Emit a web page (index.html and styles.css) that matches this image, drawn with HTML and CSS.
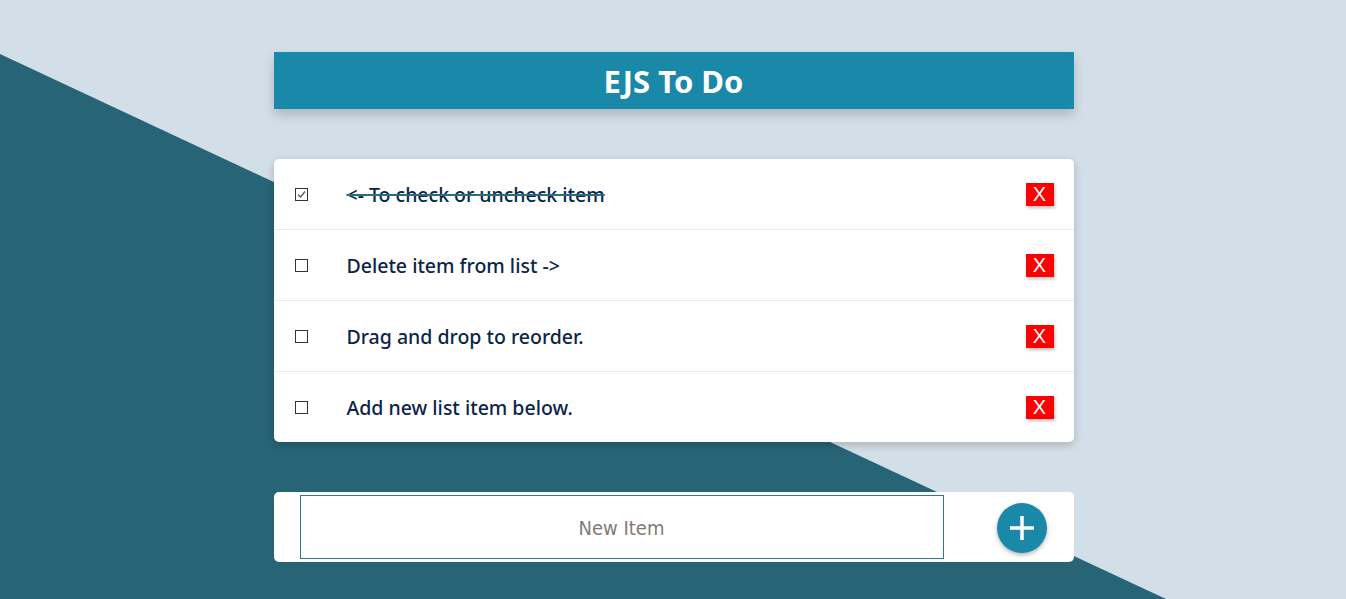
FILE: index.html
```html
<!DOCTYPE html>
<html lang="en">
<head>
<meta charset="utf-8">
<title>EJS To Do</title>
<link rel="stylesheet" href="styles.css">
</head>
<body>
<div class="backdrop"></div>
<main class="app">
  <header class="title-bar">
    <h1>EJS To Do</h1>
  </header>
  <ul class="todo-list">
    <li class="todo-row">
      <span class="check checked"><svg viewBox="0 0 13 13" width="13" height="13"><rect x="0.5" y="0.5" width="12" height="12" fill="#fff" stroke="#333"/><path d="M3 6.5 L5.5 9 L10 3.5" fill="none" stroke="#555" stroke-width="1.2"/></svg></span>
      <span class="todo-text done">&lt;- To check or uncheck item</span>
      <button class="del">X</button>
    </li>
    <li class="todo-row">
      <span class="check"><svg viewBox="0 0 13 13" width="13" height="13"><rect x="0.5" y="0.5" width="12" height="12" fill="#fff" stroke="#333"/></svg></span>
      <span class="todo-text">Delete item from list -&gt;</span>
      <button class="del">X</button>
    </li>
    <li class="todo-row">
      <span class="check"><svg viewBox="0 0 13 13" width="13" height="13"><rect x="0.5" y="0.5" width="12" height="12" fill="#fff" stroke="#333"/></svg></span>
      <span class="todo-text">Drag and drop to reorder.</span>
      <button class="del">X</button>
    </li>
    <li class="todo-row">
      <span class="check"><svg viewBox="0 0 13 13" width="13" height="13"><rect x="0.5" y="0.5" width="12" height="12" fill="#fff" stroke="#333"/></svg></span>
      <span class="todo-text">Add new list item below.</span>
      <button class="del">X</button>
    </li>
  </ul>
  <form class="add-card">
    <input class="new-item" type="text" placeholder="New Item">
    <button class="add-btn" type="button"><svg viewBox="0 0 50 50" width="50" height="50"><path d="M25 13 V37 M13 25 H37" stroke="#fff" stroke-width="3.5"/></svg></button>
  </form>
</main>
</body>
</html>
```
FILE: styles.css
```css
* { box-sizing: border-box; }
html, body { margin: 0; height: 100%; }
body {
  background: #d3dfe8;
  font-family: "Noto Sans", "DejaVu Sans", sans-serif;
  overflow: hidden;
  position: relative;
  padding-left: 1px;
}
.backdrop {
  position: absolute;
  inset: 0;
  background: #276476;
  clip-path: polygon(0 54px, 1166px 100%, 0 100%);
  z-index: 0;
}
.app {
  position: relative;
  z-index: 1;
  width: 800px;
  margin: 0 auto;
  padding-top: 52px;
  display: flex;
  flex-direction: column;
  gap: 50px;
}
.title-bar {
  height: 57px;
  background: #1a88a8;
  box-shadow: 0 6px 10px rgba(0, 0, 0, 0.18);
  display: flex;
  align-items: center;
  justify-content: center;
}
.title-bar h1 {
  margin: 0;
  color: #fff;
  font-size: 31px;
  font-weight: 700;
}
.todo-list {
  list-style: none;
  margin: 0;
  padding: 0;
  background: #fff;
  border-radius: 5px;
  box-shadow: 0 3px 8px rgba(0, 0, 0, 0.2);
}
.todo-row {
  height: 71px;
  display: flex;
  align-items: center;
  padding: 0 20px 0 21px;
  border-bottom: 1px solid #e8ecef;
}
.todo-row:last-child { border-bottom: none; height: 70px; }
.check { width: 13px; height: 13px; display: flex; }
.todo-text {
  flex: 1;
  margin-left: 39px;
  font-size: 19.5px;
  font-weight: 500;
  color: #0b2548;
  padding-top: 1px;
}
.todo-text.done {
  text-decoration: line-through;
  text-decoration-color: #2b6d80;
  text-decoration-thickness: 1.5px;
}
.del {
  width: 28px;
  height: 23px;
  border: none;
  padding: 0;
  background: #ff0000;
  color: #fff;
  font-family: "Liberation Sans", sans-serif;
  font-size: 20px;
  line-height: 23px;
  box-shadow: 1px 2px 3px rgba(0, 0, 0, 0.25);
}
.add-card {
  margin: 0;
  height: 70px;
  background: #fff;
  border-radius: 5px;
  display: flex;
  align-items: flex-start;
  padding: 3px 27px 0 26px;
}
.new-item {
  width: 644px;
  height: 64px;
  border: 1px solid #2b7a90;
  text-align: center;
  font-family: "DejaVu Sans Condensed", "DejaVu Sans", sans-serif;
  font-size: 20px;
  padding-top: 2px;
  color: #333;
  outline: none;
}
.new-item::placeholder { color: #807a76; }
.add-btn {
  margin-left: auto;
  margin-top: 8px;
  width: 50px;
  height: 50px;
  border: none;
  padding: 0;
  border-radius: 50%;
  background: #1a88a8;
  box-shadow: 0 2px 4px rgba(0, 0, 0, 0.3);
  display: flex;
}
```
